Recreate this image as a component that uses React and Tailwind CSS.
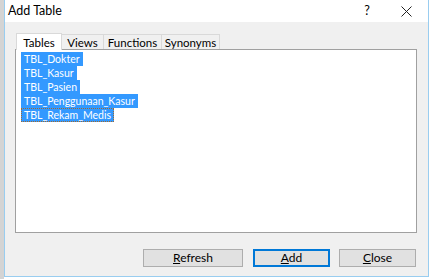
import React from 'react';

const tables = ['TBL_Dokter', 'TBL_Kasur', 'TBL_Pasien', 'TBL_Penggunaan_Kasur', 'TBL_Rekam_Medis'];
const tabs = [
  { label: 'Tables', w: 'w-[46px]' },
  { label: 'Views', w: 'w-[42px]' },
  { label: 'Functions', w: 'w-[58px]' },
  { label: 'Synonyms', w: 'w-[58px]' },
];

const Btn = ({ label, width, primary }) => (
  <button
    className={`h-[18px] ${width} bg-[#e1e1e1] text-[12px] leading-none text-black border ${
      primary ? 'border-[#0078d7] outline outline-1 outline-[#0078d7] -outline-offset-2' : 'border-[#adadad]'
    }`}
  >
    <span className="underline">{label[0]}</span>
    {label.slice(1)}
  </button>
);

const App = () => {
  return (
    <div className="w-[431px] h-[279px] bg-white flex overflow-hidden" style={{ fontFamily: 'Lato, "Liberation Sans", sans-serif' }}>
      <div className="w-[4px] h-full bg-[#d4d4d4]" />
      <div className="w-[425px] h-[277px] flex flex-col border-l border-r border-b border-[#99cdf0]">
        <div className="h-[22px] bg-white flex items-center pl-[3px] pr-[14px] text-[12.5px] text-black shrink-0">
          <span className="flex-1 pt-[1px]">Add Table</span>
          <span className="w-[12px] mr-[28px] text-center">?</span>
          <svg width="11" height="11" viewBox="0 0 11 11" className="mr-[2px]">
            <path d="M0.5 0.5 L10.5 10.5 M10.5 0.5 L0.5 10.5" stroke="#222" strokeWidth="1" />
          </svg>
        </div>
        <div className="flex-1 bg-[#f0f0f0] flex flex-col pl-[10px] pr-[11px] pt-[10px]">
          <div className="flex items-end h-[17px] pl-[1px] text-[11.5px] leading-none text-black">
            {tabs.map((t, i) =>
              i === 0 ? (
                <div
                  key={t.label}
                  className={`relative z-10 h-[17px] -mb-px ${t.w} text-center pt-[3px] bg-white border border-b-0 border-[#d9d9d9]`}
                >
                  {t.label}
                </div>
              ) : (
                <div key={t.label} className={`h-[15px] ${t.w} text-center pt-[2px] bg-[#f0f0f0] border border-b-0 border-l-0 border-[#d9d9d9]`}>
                  {t.label}
                </div>
              )
            )}
          </div>
          <div className="h-[184px] bg-white border border-[#a0a0a0] pl-[5px] pt-[2px] flex flex-col items-start text-[10.5px]">
            {tables.map((t, i) => (
              <div
                key={t}
                className={`h-[14px] leading-[14px] px-[3px] bg-[#3399ff] text-white ${
                  i === tables.length - 1 ? 'outline outline-1 outline-dotted outline-[#a06a30] -outline-offset-1' : ''
                }`}
              >
                {t}
              </div>
            ))}
          </div>
          <div className="flex justify-end items-start gap-[10px] mt-[16px] pr-[1px]">
            <Btn label="Refresh" width="w-[100px]" />
            <Btn label="Add" width="w-[77px] -mr-[1px]" primary />
            <Btn label="Close" width="w-[77px]" />
          </div>
        </div>
      </div>
    </div>
  );
};

export default App;
